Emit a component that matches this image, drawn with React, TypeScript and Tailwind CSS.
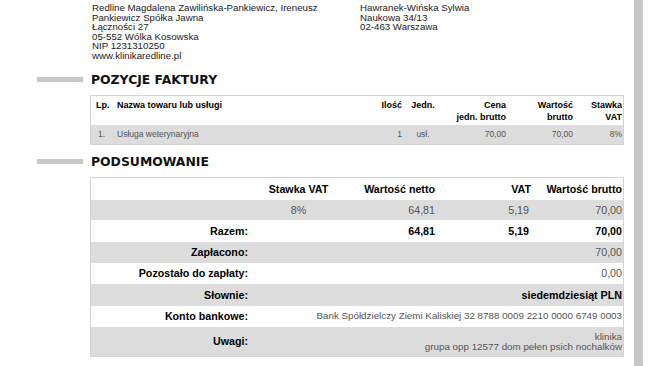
import React from 'react';

const SectionTitle: React.FC<{ title: string }> = ({ title }) => (
    <div className="flex items-center h-[14px]">
        <div className="ml-[37px] w-[46px] h-[5px] bg-[#c8c8c8]" />
        <h2 className="ml-[8px] font-['DejaVu_Sans',sans-serif] font-bold text-[12.4px] leading-[14px] text-[#111]">
            {title}
        </h2>
    </div>
);

const SummaryRow: React.FC<{
    label: string;
    gray?: boolean;
    h?: string;
    children?: React.ReactNode;
}> = ({ label, gray, h = 'h-[21px]', children }) => (
    <div className={`flex ${h} items-center ${gray ? 'bg-[#dcdcdc]' : 'bg-white'}`}>
        <div className="w-[162px] pr-[5px] text-right font-bold text-black">{label}</div>
        {children}
    </div>
);

const App: React.FC = () => {
    return (
        <div className="w-[650px] h-[366px] bg-white flex overflow-hidden font-['Liberation_Sans',Arial,sans-serif]">
            <main className="w-[634px] flex flex-col">
                {/* Seller / buyer addresses */}
                <div className="flex pt-[3px] text-[9.7px] leading-[9.6px] text-[#1a1a1a]">
                    <div className="ml-[92px] w-[268px]">
                        <p>Redline Magdalena Zawilińska-Pankiewicz, Ireneusz</p>
                        <p>Pankiewicz Spółka Jawna</p>
                        <p>Łączności 27</p>
                        <p>05-552 Wólka Kosowska</p>
                        <p>NIP 1231310250</p>
                        <p>www.klinikaredline.pl</p>
                    </div>
                    <div>
                        <p>Hawranek-Wińska Sylwia</p>
                        <p>Naukowa 34/13</p>
                        <p>02-463 Warszawa</p>
                    </div>
                </div>

                <div className="mt-[12px]">
                    <SectionTitle title="POZYCJE FAKTURY" />
                </div>

                {/* Invoice items */}
                <div className="mt-[8px] ml-[90px] w-[534px] border border-[#d4d4d4]">
                    <div className="flex h-[29px] pt-[3px] text-[9px] leading-[12px] font-bold text-black">
                        <div className="w-[26px] pl-[5px]">Lp.</div>
                        <div className="w-[257px]">Nazwa towaru lub usługi</div>
                        <div className="w-[30px] text-right pr-[2px]">Ilość</div>
                        <div className="w-[38px] text-center">Jedn.</div>
                        <div className="w-[66px] text-right pr-[2px]">Cena<br />jedn. brutto</div>
                        <div className="w-[67px] text-right pr-[2px]">Wartość<br />brutto</div>
                        <div className="flex-1 text-right pr-[1px]">Stawka<br />VAT</div>
                    </div>
                    <div className="flex h-[19px] items-center bg-[#dcdcdc] text-[8.5px] text-[#555]">
                        <div className="w-[26px] pl-[7px]">1.</div>
                        <div className="w-[257px]">Usługa weterynaryjna</div>
                        <div className="w-[30px] text-right pr-[2px]">1</div>
                        <div className="w-[38px] text-center">usł.</div>
                        <div className="w-[66px] text-right pr-[2px]">70,00</div>
                        <div className="w-[67px] text-right pr-[2px]">70,00</div>
                        <div className="flex-1 text-right pr-[1px]">8%</div>
                    </div>
                </div>

                <div className="mt-[10px]">
                    <SectionTitle title="PODSUMOWANIE" />
                </div>

                {/* Summary */}
                <div className="mt-[8px] ml-[90px] w-[534px] border border-[#d4d4d4] text-[10.7px] leading-[12px]">
                    <div className="flex h-[22px] items-center font-bold text-black">
                        <div className="w-[162px]" />
                        <div className="w-[91px] text-center">Stawka VAT</div>
                        <div className="w-[93px] text-right pr-[2px]">Wartość netto</div>
                        <div className="w-[95px] text-right pr-[1px]">VAT</div>
                        <div className="flex-1 text-right pr-[1px]">Wartość brutto</div>
                    </div>
                    <div className="flex h-[20px] items-center bg-[#dcdcdc] text-[#555]">
                        <div className="w-[162px]" />
                        <div className="w-[91px] text-center">8%</div>
                        <div className="w-[93px] text-right pr-[2px]">64,81</div>
                        <div className="w-[95px] text-right pr-[3px]">5,19</div>
                        <div className="flex-1 text-right pr-[1px]">70,00</div>
                    </div>
                    <SummaryRow label="Razem:" h="h-[22px]">
                        <div className="w-[91px]" />
                        <div className="w-[93px] text-right pr-[2px] font-bold">64,81</div>
                        <div className="w-[95px] text-right pr-[3px] font-bold">5,19</div>
                        <div className="flex-1 text-right pr-[1px] font-bold">70,00</div>
                    </SummaryRow>
                    <SummaryRow label="Zapłacono:" gray>
                        <div className="flex-1 text-right pr-[1px] text-[#555]">70,00</div>
                    </SummaryRow>
                    <SummaryRow label="Pozostało do zapłaty:">
                        <div className="flex-1 text-right pr-[1px] text-[#555]">0,00</div>
                    </SummaryRow>
                    <SummaryRow label="Słownie:" gray h="h-[22px]">
                        <div className="flex-1 text-right pr-[1px] font-bold text-black">siedemdziesiąt PLN</div>
                    </SummaryRow>
                    <SummaryRow label="Konto bankowe:">
                        <div className="flex-1 text-right pr-[1px] text-[9.8px] text-[#555]">
                            Bank Spółdzielczy Ziemi Kaliskiej 32 8788 0009 2210 0000 6749 0003
                        </div>
                    </SummaryRow>
                    <SummaryRow label="Uwagi:" gray h="h-[29px]">
                        <div className="flex-1 pt-[2px] text-right pr-[1px] text-[9.8px] leading-[10px] text-[#555]">
                            klinika<br />grupa opp 12577 dom pełen psich nochalków
                        </div>
                    </SummaryRow>
                </div>
            </main>

            {/* Viewer scrollbar */}
            <div className="w-[9px] h-full bg-[#c8c8c8]" />
        </div>
    );
};

export default App;
